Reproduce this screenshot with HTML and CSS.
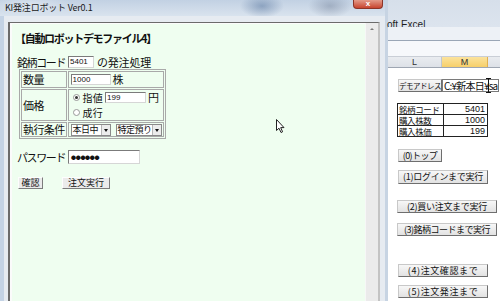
FILE: index.html
```html
<!DOCTYPE html>
<html lang="ja">
<head>
<meta charset="utf-8">
<title>KI発注ロボット</title>
<link rel="stylesheet" href="styles.css">
</head>
<body>
<div class="screen">
  <div class="dialog">
    <div class="titlebar">
      <span class="title">KI発注ロボット Ver0.1</span>
      <span class="close">x</span>
    </div>
    <div class="frame">
      <div class="client">
        <div class="content">
          <div class="heading">【自動ロボットデモファイル4】</div>
          <div class="line code-line"><span class="kana">銘柄コード</span><span class="input w-code">5401</span>の発注処理</div>
          <table class="order">
            <tr class="r-qty">
              <td class="lbl">数量</td>
              <td class="val"><div class="line"><span class="input w-qty">1000</span><span class="unit">株</span></div></td>
            </tr>
            <tr class="r-price">
              <td class="lbl">価格</td>
              <td class="val">
                <div class="line"><span class="radio on"></span><span class="rtext">指値</span><span class="input w-price">199</span><span class="unit">円</span></div>
                <div class="line"><span class="radio"></span><span class="rtext">成行</span></div>
              </td>
            </tr>
            <tr class="r-cond">
              <td class="lbl">執行条件</td>
              <td class="val"><div class="line"><span class="select w-sel1">本日中<span class="arrow"></span></span><span class="select w-sel2">特定預り<span class="arrow"></span></span></div></td>
            </tr>
          </table>
          <div class="line pw-line"><span class="kana">パスワード</span><span class="input w-pw">●●●●●●</span></div>
          <div class="line btn-line"><span class="btn b-ok">確認</span><span class="btn b-exec">注文実行</span></div>
          <svg class="cursor" width="10" height="15" viewBox="0 0 10 15"><path d="M0.5 0.5 L0.5 11.5 L3 9.2 L5 13.5 L6.6 12.8 L4.7 8.6 L8 8.6 Z" fill="#fff" stroke="#222" stroke-width="1" stroke-linejoin="round"/></svg>
        </div>
        <div class="scrollbar"><span class="up"></span></div>
      </div>
    </div>
  </div>

  <div class="excel">
    <div class="xl-title"><span class="xl-name">oft Excel</span></div>
    <div class="xl-ribbon"></div>
    <div class="xl-formula"></div>
    <div class="xl-head">
      <span class="col c-l">L</span>
      <span class="col c-m">M</span>
      <span class="col c-n"></span>
    </div>
    <div class="xl-cells">
      <div class="demo-row">
        <span class="xbtn demo-btn">デモアドレス</span>
        <span class="demo-field">C:¥新本日¥sa</span>
        <span class="ibeam"></span>
      </div>
      <table class="xl-table">
        <tr><td class="k">銘柄コード</td><td class="v">5401</td></tr>
        <tr><td class="k">購入株数</td><td class="v">1000</td></tr>
        <tr><td class="k">購入株価</td><td class="v">199</td></tr>
      </table>
      <span class="xbtn xb0">(0)トップ</span>
      <span class="xbtn xb1">(1)ログインまで実行</span>
      <span class="xbtn xb2">(2)買い注文まで実行</span>
      <span class="xbtn xb3">(3)銘柄コードまで実行</span>
      <span class="xbtn xb4">(4)注文確認まで</span>
      <span class="xbtn xb5">(5)注文発注まで</span>
    </div>
  </div>
</div>
</body>
</html>
```

FILE: styles.css
```css
html, body {
  margin: 0;
  padding: 0;
}
body {
  width: 500px;
  height: 301px;
  overflow: hidden;
  font-family: "Noto Sans CJK JP", "Noto Sans", sans-serif;
  color: #111;
}
.screen {
  display: flex;
  width: 500px;
  height: 301px;
  overflow: hidden;
}

/* ---------- dialog ---------- */
.dialog {
  width: 385px;
  flex: none;
  display: flex;
  flex-direction: column;
  background: #d3dde9;
}
.titlebar {
  height: 16px;
  flex: none;
  display: flex;
  align-items: flex-start;
  background:
    radial-gradient(ellipse 22px 12px at 262px 6px, rgba(90,120,160,0.55), rgba(90,120,160,0) 100%),
    radial-gradient(ellipse 22px 12px at 330px 6px, rgba(110,125,150,0.45), rgba(110,125,150,0) 100%),
    radial-gradient(ellipse 40px 10px at 30px 4px, rgba(255,255,255,0.35), rgba(255,255,255,0) 100%),
    linear-gradient(#c2d1e3, #d9e3ee);
}
.title {
  font-size: 9px;
  line-height: 11px;
  margin: 2px 0 0 5px;
  color: #1b1b1b;
  letter-spacing: -0.2px;
  white-space: nowrap;
}
.close {
  margin-left: auto;
  margin-right: 2px;
  width: 30px;
  height: 9px;
  box-sizing: border-box;
  background: linear-gradient(#e39a88, #c8452f);
  border: 1px solid #8c3528;
  border-top: none;
  border-radius: 0 0 4px 4px;
  color: #fff;
  font-family: "Liberation Sans", sans-serif;
  font-weight: bold;
  font-size: 8px;
  line-height: 7px;
  text-align: center;
}
.frame {
  flex: 1;
  display: flex;
  padding: 6px 5px 0 8px;
  background: linear-gradient(to right, #c4d3e5 0, #c4d3e5 4px, #e6ebf1 4px, #e6ebf1 100%);
  min-height: 0;
}
.client {
  flex: 1;
  display: flex;
  border-top: 1px solid #6b6b6b;
  border-left: 2px solid #6b6b6b;
  border-right: 2px solid #c3c3c3;
  min-height: 0;
}
.content {
  position: relative;
  flex: 1;
  background: #effef0;
  border-top: 1px solid #fbfbfb;
  border-left: 2px solid #fbfbfb;
  padding: 8px 0 0 5px;
  font-size: 11px;
  line-height: 13px;
}
.heading {
  font-weight: bold;
  margin-left: -2px;
  letter-spacing: -1.3px;
  height: 13px;
  white-space: nowrap;
}
.line {
  display: flex;
  align-items: center;
  white-space: nowrap;
}
.kana { letter-spacing: -1.4px; }
.code-line {
  margin-top: 11px;
  height: 12px;
  letter-spacing: -0.2px;
}
.input {
  display: inline-block;
  box-sizing: border-box;
  background: #fff;
  border: 1px solid;
  border-color: #7b7b7b #d6d6d6 #d6d6d6 #7b7b7b;
  font-family: "Liberation Sans", sans-serif;
  font-size: 8px;
  line-height: 9px;
  padding-left: 1px;
  letter-spacing: 0;
  color: #111;
}
.w-code { width: 26px; height: 12px; margin: 0 3px 0 3px; }
.w-qty { width: 40px; height: 11px; }
.w-price { width: 41px; height: 11px; margin-left: 2px; }
.w-pw {
  width: 72px;
  height: 14px;
  margin-left: 3px;
  font-family: "Noto Sans CJK JP", sans-serif;
  font-size: 5px;
  line-height: 12px;
  letter-spacing: -0.3px;
  padding-left: 2px;
}
.unit { margin-left: 2px; }

.order {
  margin: 1px 0 0 2px;
  border-collapse: separate;
  border-spacing: 1px;
  border: 1px solid #a9a9a9;
  font-size: 11px;
}
.order td {
  border: 1px solid #a9a9a9;
  padding: 0 1px;
  vertical-align: middle;
  white-space: nowrap;
}
.order td.lbl {
  width: 41px;
  letter-spacing: -0.6px;
}
.order td.val {
  width: 86px;
  padding-left: 2px;
}
.r-qty td { height: 15px; }
.r-price td { height: 30px; }
.r-price .line { height: 15px; line-height: 15px; }
.r-cond td { height: 13px; }
.rtext { font-size: 10px; letter-spacing: 0.2px; }
.radio {
  display: inline-block;
  width: 5px;
  height: 5px;
  border: 1px solid #999;
  border-radius: 50%;
  background: #fff;
  margin: 0 3px 0 2px;
  position: relative;
}
.radio.on::after {
  content: "";
  position: absolute;
  left: 1px;
  top: 1px;
  width: 3px;
  height: 3px;
  border-radius: 50%;
  background: #333;
}
.select {
  display: inline-flex;
  align-items: center;
  box-sizing: border-box;
  height: 12px;
  border: 1px solid #8a8a8a;
  background: #fff;
  font-size: 9px;
  line-height: 10px;
  padding-left: 1px;
  letter-spacing: -0.5px;
}
.w-sel1 { width: 40px; }
.w-sel2 { width: 46px; margin-left: 5px; }
.arrow {
  margin-left: auto;
  width: 9px;
  height: 10px;
  box-sizing: border-box;
  border-left: 1px solid #b5b5b5;
  background: #ececec;
  position: relative;
}
.arrow::after {
  content: "";
  position: absolute;
  left: 2px;
  top: 4px;
  border-left: 2.5px solid transparent;
  border-right: 2.5px solid transparent;
  border-top: 3px solid #111;
}
.pw-line {
  margin-top: 11px;
  height: 14px;
}
.btn-line {
  margin-top: 13px;
  height: 11px;
}
.btn {
  display: inline-block;
  box-sizing: border-box;
  height: 12px;
  background: #ebebeb;
  border: 1px solid;
  border-color: #fdfdfd #7c7c7c #7c7c7c #fdfdfd;
  font-size: 9px;
  line-height: 10px;
  text-align: center;
}
.b-ok { width: 25px; margin-left: 1px; }
.b-exec { width: 48px; margin-left: 19px; }
.cursor {
  position: absolute;
  left: 264px;
  top: 95px;
}
.scrollbar {
  width: 13px;
  flex: none;
  background: #ebebeb;
  border-left: 1px solid #f7f7f7;
  box-sizing: border-box;
  position: relative;
}
.up {
  position: absolute;
  left: 4px;
  top: 5px;
  border-left: 2px solid transparent;
  border-right: 2px solid transparent;
  border-bottom: 2px solid #7a7a7a;
}

/* ---------- excel ---------- */
.excel {
  flex: 1;
  display: flex;
  flex-direction: column;
  background: #fff;
  border-left: 3px solid #c7d4e3;
  min-width: 0;
}
.xl-title {
  height: 27px;
  background: linear-gradient(#d6dfea, #dce4ee);
  box-sizing: border-box;
  padding: 9px 0 0 0;
}
.xl-name {
  font-family: "Liberation Sans", sans-serif;
  font-size: 10px;
  line-height: 12px;
  color: #1e1e1e;
  margin-left: -1px;
}
.xl-ribbon {
  height: 13px;
  background: #edf1f6;
  border-bottom: 1px solid #9aa6b6;
}
.xl-formula {
  height: 15px;
  background: #f6f8fb;
}
.xl-head {
  height: 10px;
  display: flex;
  border-top: 1px solid #c9ced6;
  border-bottom: 1px solid #9ea6b2;
  font-family: "Liberation Sans", sans-serif;
  font-size: 9px;
  line-height: 10px;
  color: #333;
}
.col {
  text-align: center;
  background: linear-gradient(#e9ecf0, #dde1e7);
  border-right: 1px solid #c1c7cf;
}
.c-l { width: 53px; }
.c-m { width: 45px; background: linear-gradient(#fbe39d, #f6cf6a); border-right-color: #e0b050; }
.c-n { flex: 1; border-right: none; }
.xl-cells {
  flex: 1;
  display: flex;
  flex-direction: column;
  align-items: flex-start;
  padding: 11px 0 0 10px;
  font-size: 9px;
}
.xbtn {
  display: inline-block;
  box-sizing: border-box;
  background: linear-gradient(#f7f7f7, #e2e2e2);
  border: 1px solid;
  border-color: #c8c8c8 #6e6e6e #6e6e6e #c8c8c8;
  font-size: 9px;
  line-height: 11px;
  height: 13px;
  padding: 0 2px;
  white-space: nowrap;
  letter-spacing: -0.3px;
  text-align: center;
  color: #111;
}
.demo-row {
  display: flex;
  align-items: center;
  position: relative;
  height: 13px;
}
.demo-btn {
  width: 44px;
  padding: 0;
  font-size: 7.5px;
  letter-spacing: -0.5px;
}
.demo-field {
  display: block;
  width: 57px;
  height: 13px;
  box-sizing: border-box;
  border: 1px solid #7a7a7a;
  background: #fff;
  font-size: 10px;
  line-height: 11px;
  overflow: hidden;
  white-space: nowrap;
  padding-left: 1px;
  letter-spacing: -0.8px;
}
.ibeam {
  position: absolute;
  left: 90px;
  top: -1px;
  width: 1px;
  height: 15px;
  background: #111;
}
.ibeam::before, .ibeam::after {
  content: "";
  position: absolute;
  left: -2px;
  width: 5px;
  height: 1px;
  background: #111;
}
.ibeam::before { top: 0; }
.ibeam::after { bottom: 0; }
.xl-table {
  margin: 11px 0 0 -1px;
  border-collapse: collapse;
  border: 1px solid #111;
  font-size: 8.5px;
  line-height: 10px;
}
.xl-table td {
  border: 1px solid #222;
  height: 10px;
  padding: 0 1px;
  white-space: nowrap;
}
.xl-table td.k { width: 43px; letter-spacing: -0.4px; }
.xl-table td.v {
  width: 40px;
  text-align: right;
  font-family: "Liberation Sans", sans-serif;
  font-size: 9px;
  padding-right: 2px;
}
.xb0 { margin-top: 12px; width: 44px; letter-spacing: -0.6px; }
.xb1 { margin-top: 8px; width: 90px; height: 14px; }
.xb2 { margin-top: 16px; width: 100px; margin-left: -1px; }
.xb3 { margin-top: 10px; width: 100px; margin-left: -1px; letter-spacing: -0.5px; }
.xb4 { margin-top: 28px; width: 90px; letter-spacing: 0.6px; }
.xb5 { margin-top: 8px; width: 90px; letter-spacing: 0.6px; }
```
